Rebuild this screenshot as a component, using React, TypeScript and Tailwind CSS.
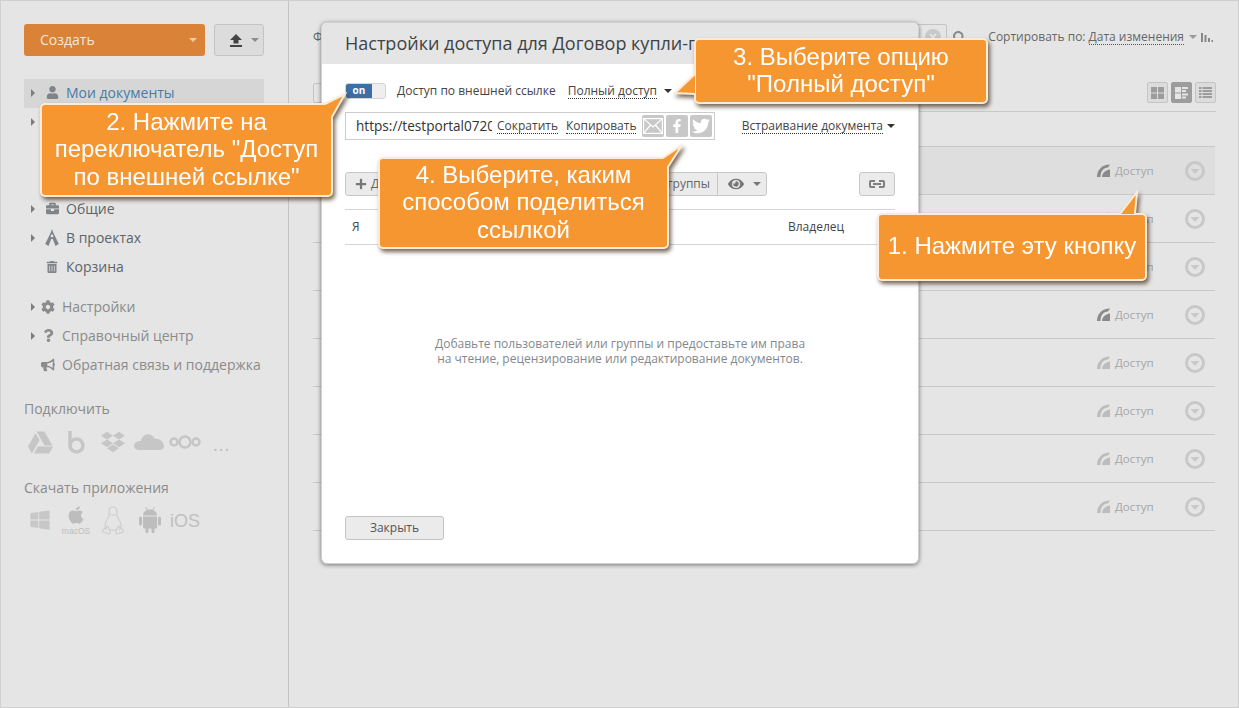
import type { ReactNode } from "react";
import {
  FaApple,
  FaBriefcase,
  FaBullhorn,
  FaCog,
  FaDropbox,
  FaEye,
  FaFacebookF,
  FaGoogleDrive,
  FaPlus,
  FaQuestion,
  FaSearch,
  FaTimes,
  FaTrashAlt,
  FaTwitter,
  FaUser,
  FaWindows,
} from "react-icons/fa";

const CaretDown = ({ className }: { className: string }) => (
  <span className={`inline-block h-0 w-0 border-x-[4px] border-t-[4px] border-x-transparent ${className}`} />
);

const ArrowRight = () => (
  <span className="inline-block h-0 w-0 border-y-[4px] border-l-[4px] border-y-transparent border-l-[#7d7d7d]" />
);

const CompassIcon = () => (
  <svg width="14" height="17" viewBox="0 0 14 17" fill="#7f8488">
    <path d="M7 0 8.200 3.400 13.800 15 10.500 17 7.800 10H6.200L3.500 17 .2 15 5.800 3.400Z" />
    <circle cx="7" cy="7" r="1.400" fill="#e5e5e5" />
  </svg>
);

const UploadIcon = () => (
  <svg width="14" height="14" viewBox="0 0 14 14" fill="#444">
    <path d="M7 1 13 7H9.500V10.500H4.500V7H1Z" />
    <rect x="1" y="12" width="12" height="2" />
  </svg>
);

const ShareIcon = ({ className }: { className: string }) => (
  <svg width="13" height="13" viewBox="0 0 13 13" className={className}>
    <path d="M0 13C0 6 5 .5 13 .5L11 3.500C6.500 3.500 3.500 7.500 3.500 13Z" />
    <path d="M5 13C5 9.500 8 6 13 5.500V13Z" />
  </svg>
);

const RowMenuIcon = () => (
  <svg width="20" height="20" viewBox="0 0 20 20">
    <circle cx="10" cy="10" r="8.500" fill="none" stroke="#c8c8c8" strokeWidth="3" />
    <path d="M5.500 8H14.500L10 13Z" fill="#c8c8c8" />
  </svg>
);

const LinuxIcon = () => (
  <svg width="24" height="29" viewBox="0 0 24 29" fill="none" stroke="#cdcdcd" strokeWidth="1.100">
    <path d="M12 1C9 1 8 3.500 8 6 8 8.500 8.500 9.500 7.500 11 6 13.500 3.500 16.500 4 20.500 4.300 22.500 5 23 6 24" />
    <path d="M12 1C15 1 16 3.500 16 6 16 8.500 15.500 9.500 16.500 11 18 13.500 20.500 16.500 20 20.500 19.700 22.500 19 23 18 24" />
    <path d="M9 8C10 9.500 14 9.500 15 8" />
    <path d="M8.500 24H15.500" />
    <path d="M6.500 20 1.500 24.500C1 25.500 2 26 3 26.300L8 28C9.500 28 9.500 26 8.500 24 8 22.500 7.500 21 6.500 20Z" />
    <path d="M17.500 20 22.500 24.500C23 25.500 22 26 21 26.300L16 28C14.500 28 14.500 26 15.500 24 16 22.500 16.500 21 17.500 20Z" />
  </svg>
);

const AndroidIcon = () => (
  <svg width="22" height="26" viewBox="0 0 22 26" fill="#bdbdbd">
    <path d="M4 8.500C4 5 7 2.500 11 2.500S18 5 18 8.500Z" />
    <path d="M6.500 0 8.500 3.500M15.500 0 13.500 3.500" stroke="#bdbdbd" strokeWidth="1" />
    <path d="M4 9.500H18V20C18 21 17.500 21.500 16.500 21.500H5.500C4.500 21.500 4 21 4 20Z" />
    <rect x="0" y="9.500" width="3" height="9" rx="1.500" />
    <rect x="19" y="9.500" width="3" height="9" rx="1.500" />
    <rect x="6.500" y="20" width="3" height="6" rx="1.500" />
    <rect x="12.500" y="20" width="3" height="6" rx="1.500" />
  </svg>
);

const Callout = ({
  className,
  tail,
  children,
}: {
  className: string;
  tail: string;
  children: ReactNode;
}) => (
  <div className={`absolute drop-shadow-[2px_3px_2px_rgba(60,40,20,0.7)] ${className}`}>
    <div className="flex h-full w-full flex-col items-center justify-center rounded-[5px] border-2 border-[#fdebd7] bg-[#f59630] pb-[2px] font-['Liberation_Sans',sans-serif] text-[24px] leading-[27.5px] text-white">
      {children}
    </div>
    <svg className="absolute left-0 top-0 h-full w-full overflow-visible">
      <polygon points={tail} fill="#f59630" />
      <polyline points={tail} fill="none" stroke="#fdebd7" strokeWidth="2" />
    </svg>
  </div>
);

const topNav = [
  { label: "Мои документы", icon: <FaUser size={13} className="text-[#7f8488]" />, active: true, arrow: true },
  { label: "Доступно для меня", icon: null, arrow: true },
  { label: "Избранное", icon: null },
  { label: "Недавние", icon: null },
  { label: "Общие", icon: <FaBriefcase size={13} className="text-[#7f8488]" />, arrow: true },
  { label: "В проектах", icon: <CompassIcon />, arrow: true },
  { label: "Корзина", icon: <FaTrashAlt size={12} className="text-[#7f8488]" /> },
];

const bottomNav = [
  { label: "Настройки", icon: <FaCog size={14} />, arrow: true },
  { label: "Справочный центр", icon: <FaQuestion size={13} />, arrow: true },
  { label: "Обратная связь и поддержка", icon: <FaBullhorn size={14} /> },
];

const rows = [
  { iconClass: "fill-[#8a8a8a]", rowClass: "bg-[#dedede]" },
  { iconClass: "fill-[#bdbdbd]", rowClass: "" },
  { iconClass: "fill-[#bdbdbd]", rowClass: "" },
  { iconClass: "fill-[#8a8a8a]", rowClass: "" },
  { iconClass: "fill-[#bdbdbd]", rowClass: "" },
  { iconClass: "fill-[#bdbdbd]", rowClass: "" },
  { iconClass: "fill-[#bdbdbd]", rowClass: "" },
  { iconClass: "fill-[#bdbdbd]", rowClass: "" },
];

const Sidebar = () => (
  <aside className="h-full w-[288px] shrink-0 border-r border-[#c4c4c4] pl-[23px] pr-[24px] pt-[23px]">
    <div className="flex gap-[9px]">
      <div className="flex h-[32px] w-[181px] items-center justify-between rounded-[3px] bg-[#d98238] pb-[2px] pl-[16px] pr-[8px] text-[14px] text-[#f7e7d6]">
        Создать
        <CaretDown className="mt-[2px] border-t-[#f0cba8]" />
      </div>
      <div className="flex h-[32px] w-[50px] items-center gap-[8px] rounded-[3px] border border-[#c4c4c4] bg-[#dcdcdc] pl-[14px]">
        <UploadIcon />
        <CaretDown className="border-t-[#8b8b8b]" />
      </div>
    </div>
    <nav className="mt-[23px]">
      {topNav.map(item => (
        <div
          key={item.label}
          className={`flex h-[29px] items-center pb-[2px] pl-[7px] text-[14px] ${item.active ? "bg-[#d6d6d6] text-[#4a7ba6]" : "text-[#5f6468]"}`}
        >
          <span className="flex w-[8px] items-center">{item.arrow && <ArrowRight />}</span>
          <span className="flex w-[27px] items-center justify-center pr-[1px]">{item.icon}</span>
          {item.label}
        </div>
      ))}
    </nav>
    <nav className="mt-[11px]">
      {bottomNav.map(item => (
        <div key={item.label} className="flex h-[29px] items-center whitespace-nowrap pb-[2px] pl-[7px] text-[14px] text-[#8b8b8b]">
          <span className="flex w-[10px] items-center">{item.arrow && <ArrowRight />}</span>
          <span className="flex w-[21px] items-center justify-center pr-[7px]">{item.icon}</span>
          {item.label}
        </div>
      ))}
    </nav>
    <div className="mt-[19px] text-[14px] leading-[20px] text-[#8b8b8b]">Подключить</div>
    <div className="mt-[8px] flex h-[30px] items-center pl-[4px] text-[#c6c6c6]">
      <FaGoogleDrive size={25} />
      <svg width="17" height="24" viewBox="0 0 17 24" className="ml-[15px]" fill="none" stroke="#c6c6c6" strokeWidth="3.500">
        <path d="M2 1V15" />
        <circle cx="8.500" cy="15.500" r="6.500" />
      </svg>
      <FaDropbox size={24} className="ml-[16px]" />
      <svg width="30" height="18" viewBox="0 0 30 18" className="ml-[9px]" fill="#c6c6c6">
        <path d="M7 8C8 3 13 0 17 2 19 3 20 4 21 6 25 5 29 8 30 13 30 16 28 17 26 17H5C2 17 0 15 0 13 0 10 3 8 7 8Z" />
      </svg>
      <svg width="32" height="16" viewBox="0 0 32 16" className="ml-[5px]" fill="none" stroke="#c6c6c6" strokeWidth="2.500">
        <circle cx="5" cy="8" r="3.500" />
        <circle cx="16" cy="8" r="5.500" />
        <circle cx="27" cy="8" r="3.500" />
      </svg>
      <span className="ml-[12px] mt-[3px] text-[18px] leading-none tracking-[1px] text-[#bdbdbd]">...</span>
    </div>
    <div className="mt-[21px] text-[14px] leading-[20px] text-[#8b8b8b]">Скачать приложения</div>
    <div className="mt-[7px] flex h-[30px] items-center pl-[5px] text-[#c8c8c8]">
      <FaWindows size={22} />
      <div className="ml-[11px] flex w-[28px] flex-col items-center">
        <FaApple size={20} className="mb-[2px] text-[#bdbdbd]" />
        <span className="whitespace-nowrap font-['Liberation_Sans',sans-serif] text-[8.500px] leading-[9px] text-[#bdbdbd]">macOS</span>
      </div>
      <span className="ml-[11px] flex"><LinuxIcon /></span>
      <span className="ml-[14px] flex"><AndroidIcon /></span>
      <span className="ml-[9px] mt-[3px] font-['Liberation_Sans',sans-serif] text-[18px] text-[#c0c0c0]">iOS</span>
    </div>
  </aside>
);

const ViewButton = ({ active, children }: { active?: boolean; children: ReactNode }) => (
  <div
    className={`flex h-[21px] w-[21px] items-center justify-center rounded-[2px] border ${active ? "border-[#9c9c9c] bg-[#9c9c9c]" : "border-[#c4c4c4] bg-[#dcdcdc]"}`}
  >
    {children}
  </div>
);

const MainList = () => (
  <main className="h-full min-w-0 flex-1 pl-[24px] pr-[22px] pt-[23px]">
    <div className="mr-[3px] flex h-[26px] items-center justify-between text-[12px] text-[#666]">
      <span>Фильтр</span>
      <div className="flex items-center">
        <div className="flex h-[26px] w-[220px] items-center justify-end rounded-[2px] border border-[#c4c4c4] pr-[5px]">
          <span className="flex h-[16px] w-[16px] items-center justify-center rounded-full bg-[#c8c8c8] text-[#e5e5e5]">
            <FaTimes size={10} />
          </span>
        </div>
        <FaSearch size={13} className="ml-[6px] text-[#8b8b8b]" />
        <span className="ml-[22px]">Сортировать по:</span>
        <span className="ml-[3px] border-b border-dotted border-[#555] leading-[15px]">Дата изменения</span>
        <CaretDown className="ml-[5px] border-t-[#9a9a9a]" />
        <svg width="12" height="9" viewBox="0 0 12 9" className="ml-[4px]" fill="#888">
          <rect x="0" y="0" width="2" height="9" />
          <rect x="3.500" y="2" width="2" height="7" />
          <rect x="7" y="5" width="2" height="4" />
          <rect x="10.500" y="7" width="1.500" height="2" />
        </svg>
      </div>
    </div>
    <div className="mt-[32px] flex h-[21px] items-center justify-between border-[#c4c4c4]">
      <div className="h-[20px] w-[100px] rounded-[2px] border border-[#c4c4c4]" />
      <div className="flex gap-[3px]">
        <ViewButton>
          <svg width="13" height="12" viewBox="0 0 13 12" fill="#9c9c9c">
            <rect width="6" height="5.500" />
            <rect x="7" width="6" height="5.500" />
            <rect y="6.500" width="6" height="5.500" />
            <rect x="7" y="6.500" width="6" height="5.500" />
          </svg>
        </ViewButton>
        <ViewButton active>
          <svg width="13" height="12" viewBox="0 0 13 12" fill="#e5e5e5">
            <rect width="6" height="5.500" />
            <rect y="6.500" width="6" height="5.500" />
            <rect x="7" width="6" height="2" />
            <rect x="7" y="3" width="4" height="2" />
            <rect x="7" y="6.500" width="6" height="2" />
            <rect x="7" y="9.500" width="4" height="2" />
          </svg>
        </ViewButton>
        <ViewButton>
          <svg width="13" height="11" viewBox="0 0 13 11" fill="#9c9c9c">
            <rect width="2.500" height="2" />
            <rect x="3.500" width="9.500" height="2" />
            <rect y="3" width="2.500" height="2" />
            <rect x="3.500" y="3" width="9.500" height="2" />
            <rect y="6" width="2.500" height="2" />
            <rect x="3.500" y="6" width="9.500" height="2" />
            <rect y="9" width="2.500" height="2" />
            <rect x="3.500" y="9" width="9.500" height="2" />
          </svg>
        </ViewButton>
      </div>
    </div>
    <div className="mt-[8px] h-px bg-[#c8c8c8]" />
    <div className="mr-[1px] mt-[34px] border-t border-[#c8c8c8]">
      {rows.map((row, index) => (
        <div
          key={index}
          className={`flex h-[48px] items-center justify-end border-b border-[#c8c8c8] pr-[10px] ${row.rowClass}`}
        >
          <ShareIcon className={row.iconClass} />
          <span className="ml-[5px] w-[39px] text-[11.500px] text-[#a6a6a6]">Доступ</span>
          <span className="ml-[31px] flex"><RowMenuIcon /></span>
        </div>
      ))}
    </div>
  </main>
);

const ShareDialog = () => (
  <div className="absolute left-[320px] top-[21px] h-[542px] w-[598px] overflow-hidden rounded-[6px] border border-[#d0d0d0] bg-white shadow-[0_1px_4px_rgba(0,0,0,0.5)]">
    <div className="flex h-[41px] items-center whitespace-nowrap bg-[#e5e5e5] pl-[23px] text-[18px] text-[#3d4347]">
      Настройки доступа для Договор купли-продажи
    </div>
    <div className="px-[23px] pt-[19px] text-[12px] text-[#444]">
      <div className="flex h-[16px] items-center">
        <div className="flex h-[16px] w-[41px] overflow-hidden rounded-[3px] border border-[#d4d4d4] bg-[#eee]">
          <span className="flex w-[26px] items-center justify-center bg-[#3d6fa5] pb-[1px] text-[10px] font-bold text-white">on</span>
        </div>
        <span className="ml-[11px]">Доступ по внешней ссылке</span>
        <span className="ml-[12px] border-b border-dotted border-[#333] leading-[15px]">Полный доступ</span>
        <CaretDown className="ml-[7px] border-t-[#333]" />
      </div>
      <div className="mt-[13px] flex items-center justify-between">
        <div className="flex h-[28px] w-[370px] items-center border border-[#ccc] pl-[10px]">
          <span className="w-[136px] overflow-hidden whitespace-nowrap text-[13.600px] text-[#333]">https://testportal0720.onlyoffice.com</span>
          <span className="ml-[5px] border-b border-dotted border-[#333] leading-[14px]">Сократить</span>
          <span className="ml-[8px] border-b border-dotted border-[#333] leading-[14px]">Копировать</span>
          <div className="ml-[6px] flex gap-[2px] text-white">
            <span className="flex h-[22px] w-[22px] items-center justify-center rounded-[2px] bg-[#c8c8c8]">
              <svg width="20" height="16" viewBox="0 0 20 16" fill="none" stroke="#fff" strokeWidth="1.200">
                <rect x=".6" y=".6" width="18.800" height="14.800" />
                <path d="M.6.6 10 9 19.400.6M.6 15.400 7.500 7M19.400 15.400 12.500 7" />
              </svg>
            </span>
            <span className="flex h-[22px] w-[22px] items-center justify-center rounded-[2px] bg-[#c8c8c8]">
              <FaFacebookF size={14} />
            </span>
            <span className="flex h-[22px] w-[22px] items-center justify-center rounded-[2px] bg-[#c8c8c8]">
              <FaTwitter size={18} />
            </span>
          </div>
        </div>
        <div className="flex items-center">
          <span className="border-b border-dotted border-[#333] leading-[15px]">Встраивание документа</span>
          <CaretDown className="ml-[4px] border-t-[#333]" />
        </div>
      </div>
      <div className="mt-[32px] flex items-center justify-between">
        <div className="flex h-[24px] w-[422px] items-center overflow-hidden rounded-[3px] border border-[#c8c8c8] bg-[#ebebeb] text-[#666]">
          <FaPlus size={12} className="ml-[9px] text-[#777]" />
          <span className="ml-[4px] flex-1">Добавить пользователей</span>
          <span className="pr-[7px]">Добавить группы</span>
          <span className="flex h-full w-[49px] items-center gap-[9px] border-l border-[#c8c8c8] pl-[10px]">
            <FaEye size={16} className="text-[#777]" />
            <CaretDown className="border-t-[#777]" />
          </span>
        </div>
        <div className="flex h-[24px] w-[36px] items-center justify-center rounded-[3px] border border-[#c8c8c8] bg-[#ebebeb]">
          <svg width="16" height="8" viewBox="0 0 16 8" fill="none" stroke="#808080" strokeWidth="2">
            <path d="M6 1H2C1.400 1 1 1.400 1 2V6C1 6.600 1.400 7 2 7H6" />
            <path d="M10 1H14C14.600 1 15 1.400 15 2V6C15 6.600 14.600 7 14 7H10" />
            <path d="M4 4H12" />
          </svg>
        </div>
      </div>
      <div className="mt-[13px] flex h-[36px] items-center justify-between border-y border-[#d4d4d4] pl-[7px] pr-[51px]">
        <span>Я</span>
        <span>Владелец</span>
      </div>
      <p className="mt-[91px] text-center text-[12px] leading-[15px] text-[#83888d]">
        Добавьте пользователей или группы и предоставьте им права
        <br />
        на чтение, рецензирование или редактирование документов.
      </p>
      <div className="mt-[150px] flex h-[24px] w-[99px] items-center justify-center rounded-[3px] border border-[#c4c4c4] bg-[#ebebeb] text-[#555]">
        Закрыть
      </div>
    </div>
  </div>
);

export default function App() {
  return (
    <div className="relative flex h-[708px] w-[1239px] overflow-hidden border border-[#cfcfcf] bg-[#e5e5e5] font-['Open_Sans',sans-serif]">
      <Sidebar />
      <MainList />
      <ShareDialog />
      <Callout className="left-[876px] top-[212px] h-[68px] w-[270px]" tail="243,1 260,-21 258,1">
        1. Нажмите эту кнопку
      </Callout>
      <Callout className="left-[39px] top-[102px] h-[94px] w-[293px]" tail="285,1 305,-9 292,14">
        <span>2. Нажмите на</span>
        <span>переключатель "Доступ</span>
        <span>по внешней ссылке"</span>
      </Callout>
      <Callout className="left-[693px] top-[37px] h-[66px] w-[294px]" tail="1,36 -19,55 1,56">
        <span>3. Выберите опцию</span>
        <span>"Полный доступ"</span>
      </Callout>
      <Callout className="left-[377px] top-[156px] h-[92px] w-[291px]" tail="285,1 304,-12 290,10">
        <span>4. Выберите, каким</span>
        <span>способом поделиться</span>
        <span>ссылкой</span>
      </Callout>
    </div>
  );
}
